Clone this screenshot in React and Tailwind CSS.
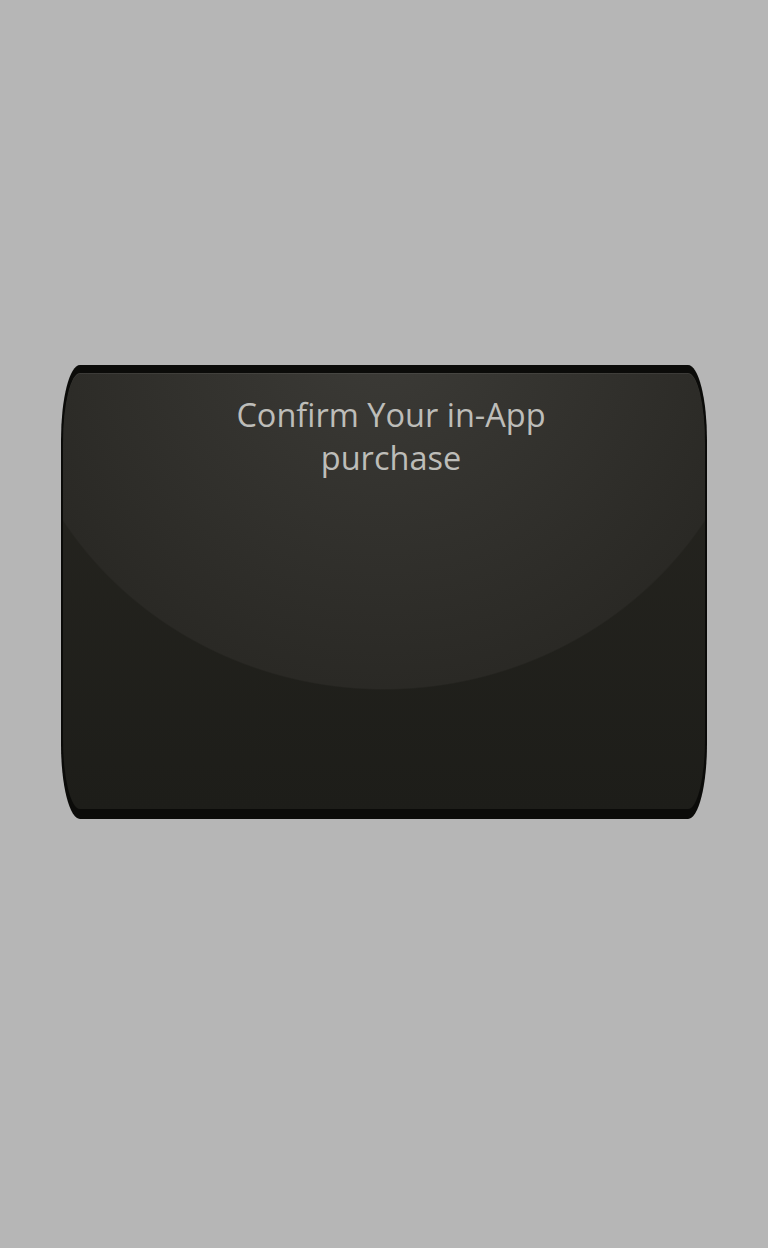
export default function App() {
  return (
    <div className="min-h-[1248px] w-full bg-[#b6b6b6] pt-[365px]">
      <div className="mx-[61px] h-[454px] rounded-[19px/75px] bg-[#0b0b09] px-[2px] pt-[8px] pb-[10px]">
        <div className="h-full rounded-[17px/70px] bg-[image:radial-gradient(ellipse_380px_362px_at_50%_-45px,#3f3e3a_0%,#3a3935_12%,#2a2925_99.6%,transparent_100%),linear-gradient(to_bottom,#272621,#1d1d19)] shadow-[inset_0_1px_0_rgba(255,255,255,0.07)]">
          <div className="pt-[20px] pl-[14px] text-center font-['Open_Sans',sans-serif] text-[32.5px] leading-[43px] text-[#bdbdb9]">
            Confirm Your in-App
            <br />
            purchase
          </div>
        </div>
      </div>
    </div>
  );
}
